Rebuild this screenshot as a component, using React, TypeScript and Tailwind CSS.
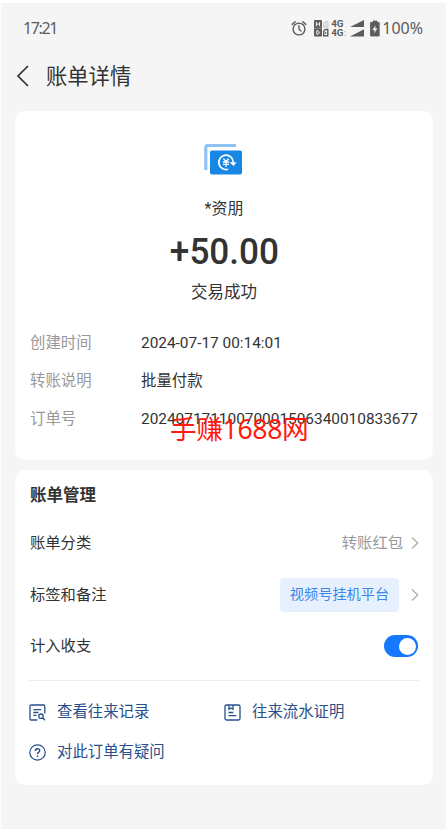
import { useState } from 'react';

const details = [
  { label: '创建时间', value: '2024-07-17 00:14:01' },
  { label: '转账说明', value: '批量付款' },
  { label: '订单号', value: '20240717110070001506340010833677' },
];

const AlarmIcon = () => (
  <svg width="16" height="17" viewBox="0 0 16 17" fill="none" stroke="#5c5c5c" strokeWidth="1.4" strokeLinecap="round">
    <circle cx="8" cy="9" r="5.9" />
    <path d="M8 5.8V9.3L10 11M1.2 4.4L4.2 1.8M14.8 4.4L11.8 1.8" />
  </svg>
);

const SimIcon = () => (
  <svg width="15" height="17" viewBox="0 0 15 17" fill="none">
    <rect x="0" y="0" width="8" height="16.5" rx="1" fill="#5c5c5c" />
    <path d="M2.4 2V6.2M5.6 2V6.2M2.4 4.1H5.6M2.8 10.8V14.2H4L5.2 13.2V11.8L4 10.8Z" stroke="#f5f5f5" strokeWidth="1" />
    <path d="M0 8.3H8" stroke="#aaa" strokeWidth="0.7" />
    <path d="M9.5 7V3.3L11.4 1.5H14V7Z" fill="#e3e3e3" stroke="#c8c8c8" />
    <path d="M9.7 15.7V11.2L11.5 9.5H13.8V15.7Z" stroke="#5c5c5c" strokeWidth="1.4" />
    <path d="M11.8 12V14" stroke="#5c5c5c" />
  </svg>
);

const SignalIcon = () => (
  <svg width="14" height="17" viewBox="0 0 14 17" fill="#5c5c5c">
    <path d="M0 7L14 0V7ZM0 16.5L14 9.3V16.5Z" />
  </svg>
);

const BatteryIcon = () => (
  <svg width="10" height="17" viewBox="0 0 10 17">
    <path d="M3 1H7V2.5H9.2V16H0.5V2.5H3Z" fill="#5c5c5c" stroke="#5c5c5c" strokeLinejoin="round" strokeWidth="0.8" />
    <path d="M5.6 5.2L2.4 10H4.6L4.1 13.6L7.4 8.6H5.2Z" fill="#f5f5f5" />
  </svg>
);

const TransferIcon = () => (
  <svg width="40" height="31" viewBox="0 0 40 31" fill="none">
    <path d="M1.8 26V3.5Q1.8 1.5 3.8 1.5H32" stroke="#90c2f6" strokeWidth="3.2" />
    <rect x="6" y="6.5" width="32" height="24" rx="1.8" fill="#1787e3" />
    <path d="M24.2 25.2A7.2 7.2 0 1 1 29.2 18.6" stroke="#fff" strokeWidth="1.7" />
    <path d="M25.6 18.2H32.6L29.6 22Z" fill="#fff" />
    <path d="M19.4 14.6L22 17.6L24.6 14.6M22 17.6V22.8M18.9 18H25.1M18.9 20.4H25.1" stroke="#fff" strokeWidth="1.4" />
  </svg>
);

const ChevronRight = () => (
  <svg width="8" height="14" viewBox="0 0 8 14" fill="none" stroke="#b0b0b0" strokeWidth="1.4">
    <path d="M1 1.5L6.7 7L1 12.5" />
  </svg>
);

const RecordIcon = () => (
  <svg width="17" height="17" viewBox="0 0 17 17" fill="none" stroke="#27508c" strokeWidth="1.3">
    <path d="M8.3 16H2.2Q1 16 1 14.8V2.2Q1 1 2.2 1H14.6Q15.8 1 15.8 2.2V9.5" />
    <path d="M4.3 5.6H12.2M4.3 8.5H9.5M4.3 11.4H7.6" />
    <circle cx="12" cy="12.2" r="2.2" />
    <path d="M13.6 13.8L16 16.2" />
  </svg>
);

const ProofIcon = () => (
  <svg width="17" height="17" viewBox="0 0 17 17" fill="none" stroke="#27508c" strokeWidth="1.3">
    <rect x="1" y="1" width="15" height="15" rx="1.4" />
    <path d="M5 1V5.3L7 4L9 5.3V1M4.5 8.5H9.2M4.5 11.7H12.4" />
  </svg>
);

const HelpIcon = () => (
  <svg width="17" height="17" viewBox="0 0 17 17" fill="none" stroke="#27508c" strokeWidth="1.2">
    <circle cx="8.5" cy="8.5" r="7.7" />
    <path d="M6.3 6.9Q6.3 4.7 8.5 4.7Q10.7 4.7 10.7 6.6Q10.7 7.6 9.5 8.4Q8.5 9 8.5 10.3" strokeWidth="1.4" />
    <path d="M8.5 11.5V12.9" strokeWidth="1.5" />
  </svg>
);

const links = [
  { label: '查看往来记录', icon: RecordIcon },
  { label: '往来流水证明', icon: ProofIcon },
  { label: '对此订单有疑问', icon: HelpIcon },
];

const App = () => {
  const [counted, setCounted] = useState(true);

  return (
    <div className="h-[829px] w-[446px] overflow-hidden bg-white pt-[3px] pl-px font-['Roboto','Noto_Sans_CJK_SC',sans-serif] text-[#333]">
      <div className="h-full bg-[#f5f5f5] pr-[13px] pl-[14px]">
        <header className="flex h-[50px] items-center justify-between pr-[10px] pl-[8px] font-['Noto_Sans',sans-serif] text-[#5c5c5c]">
          <span className="text-[16px] tracking-[-1.4px]">17:21</span>
          <div className="flex items-center">
            <AlarmIcon />
            <div className="ml-[7px]"><SimIcon /></div>
            <div className="ml-[2px] flex w-[17px] flex-col font-['Roboto',sans-serif] text-[9.8px] leading-[9px] font-bold">
              <span>4G</span>
              <span>4G<span className="text-[#bbb]">:</span></span>
            </div>
            <div className="ml-[2px]"><SignalIcon /></div>
            <div className="ml-[6px]"><BatteryIcon /></div>
            <span className="ml-[2px] text-[16px]">100%</span>
          </div>
        </header>

        <div className="flex h-[58px] items-start pt-[10px]">
          <button className="mt-[2px] ml-[1px]" aria-label="返回">
            <svg width="13" height="22" viewBox="0 0 13 22" fill="none" stroke="#333" strokeWidth="1.7">
              <path d="M12 1L2 11L12 21" />
            </svg>
          </button>
          <h1 className="ml-[17px] text-[21.3px] leading-[28px]">账单详情</h1>
        </div>

        <main className="flex flex-col gap-[10px]">
          <section className="relative h-[349px] rounded-[10px] bg-white pt-[33px] pr-[15px] pl-[15px]">
            <div className="flex flex-col items-center">
              <TransferIcon />
              <p className="mt-[22px] text-[16px] leading-[24px]">*资朋</p>
              <p className="mt-[9px] scale-x-[0.95] text-[37px] leading-[44px] font-medium">+50.00</p>
              <p className="mt-[7px] text-[16.5px] leading-[24px]">交易成功</p>
            </div>
            <dl className="mt-[20px]">
              {details.map((item) => (
                <div key={item.label} className="flex h-[38px] items-center text-[15.4px]">
                  <dt className="w-[111px] shrink-0 text-[#999]">{item.label}</dt>
                  <dd className="whitespace-nowrap">{item.value}</dd>
                </div>
              ))}
            </dl>
            <span className="absolute top-[299px] left-[155px] font-['Noto_Sans','Noto_Sans_CJK_SC',sans-serif] text-[26.7px] leading-[38px] tracking-[-0.4px] whitespace-nowrap text-[#ff1a0d]">
              手赚1688网
            </span>
          </section>

          <section className="h-[315px] rounded-[10px] bg-white pt-[14px] pr-[14px] pl-[15px]">
            <h2 className="text-[16.5px] leading-[24px] font-bold">账单管理</h2>
            <div className="mt-[10px] flex h-[50px] items-center justify-between text-[15.3px]">
              <span>账单分类</span>
              <span className="flex items-center gap-[8px] text-[#999]">转账红包 <ChevronRight /></span>
            </div>
            <div className="flex h-[54px] items-center justify-between text-[15.3px]">
              <span>标签和备注</span>
              <div className="flex items-center gap-[12px]">
                <span className="flex h-[34px] w-[119px] items-center justify-center rounded-[4px] bg-[#e7f0fe] text-[14.2px] text-[#3b86e8]">视频号挂机平台</span>
                <ChevronRight />
              </div>
            </div>
            <div className="flex h-[48px] items-center justify-between pr-px text-[15.3px]">
              <span>计入收支</span>
              <button
                role="switch"
                aria-checked={counted}
                aria-label="计入收支"
                onClick={() => setCounted(!counted)}
                className={`flex h-[22px] w-[34px] items-center rounded-full p-[2px] ${counted ? 'justify-end bg-[#1677ff]' : 'justify-start bg-gray-300'}`}
              >
                <span className="size-[17px] rounded-full bg-white" />
              </button>
            </div>
            <div className="mt-[10px] -ml-px border-t border-[#eee]" />
            <div className="mt-[11px] -ml-px grid grid-cols-2 text-[15.4px] text-[#27508c]">
              {links.map(({ label, icon: Icon }) => (
                <a key={label} className="flex h-[40px] items-center gap-[11px]">
                  <Icon />
                  <span className="pt-[2px]">{label}</span>
                </a>
              ))}
            </div>
          </section>
        </main>
      </div>
    </div>
  );
};

export default App;
